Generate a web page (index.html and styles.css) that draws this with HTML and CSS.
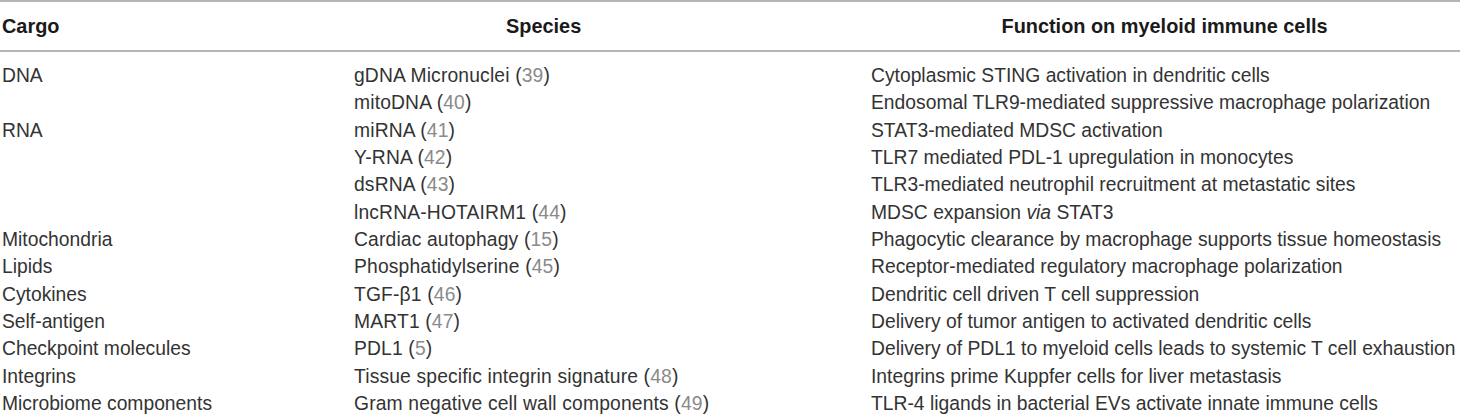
FILE: index.html
```html
<!DOCTYPE html>
<html>
<head>
<meta charset="utf-8">
<link rel="stylesheet" href="styles.css">
</head>
<body>
<div class="table">
  <div class="row head">
    <div class="c1">Cargo</div>
    <div class="c2 h-species">Species</div>
    <div class="c3 h-func">Function on myeloid immune cells</div>
  </div>
  <div class="body">
    <div class="row"><div class="c1">DNA</div><div class="c2">gDNA Micronuclei (<span class="ref">39</span>)</div><div class="c3">Cytoplasmic STING activation in dendritic cells</div></div>
    <div class="row"><div class="c1"></div><div class="c2">mitoDNA (<span class="ref">40</span>)</div><div class="c3">Endosomal TLR9-mediated suppressive macrophage polarization</div></div>
    <div class="row"><div class="c1">RNA</div><div class="c2">miRNA (<span class="ref">41</span>)</div><div class="c3">STAT3-mediated MDSC activation</div></div>
    <div class="row"><div class="c1"></div><div class="c2">Y-RNA (<span class="ref">42</span>)</div><div class="c3">TLR7 mediated PDL-1 upregulation in monocytes</div></div>
    <div class="row"><div class="c1"></div><div class="c2">dsRNA (<span class="ref">43</span>)</div><div class="c3">TLR3-mediated neutrophil recruitment at metastatic sites</div></div>
    <div class="row"><div class="c1"></div><div class="c2">lncRNA-HOTAIRM1 (<span class="ref">44</span>)</div><div class="c3">MDSC expansion <i>via</i> STAT3</div></div>
    <div class="row"><div class="c1">Mitochondria</div><div class="c2">Cardiac autophagy (<span class="ref">15</span>)</div><div class="c3">Phagocytic clearance by macrophage supports tissue homeostasis</div></div>
    <div class="row"><div class="c1">Lipids</div><div class="c2">Phosphatidylserine (<span class="ref">45</span>)</div><div class="c3">Receptor-mediated regulatory macrophage polarization</div></div>
    <div class="row"><div class="c1">Cytokines</div><div class="c2">TGF-β1 (<span class="ref">46</span>)</div><div class="c3">Dendritic cell driven T cell suppression</div></div>
    <div class="row"><div class="c1">Self-antigen</div><div class="c2">MART1 (<span class="ref">47</span>)</div><div class="c3">Delivery of tumor antigen to activated dendritic cells</div></div>
    <div class="row"><div class="c1">Checkpoint molecules</div><div class="c2">PDL1 (<span class="ref">5</span>)</div><div class="c3">Delivery of PDL1 to myeloid cells leads to systemic T cell exhaustion</div></div>
    <div class="row"><div class="c1">Integrins</div><div class="c2">Tissue specific integrin signature (<span class="ref">48</span>)</div><div class="c3">Integrins prime Kuppfer cells for liver metastasis</div></div>
    <div class="row"><div class="c1">Microbiome components</div><div class="c2">Gram negative cell wall components (<span class="ref">49</span>)</div><div class="c3">TLR-4 ligands in bacterial EVs activate innate immune cells</div></div>
  </div>
</div>
</body>
</html>
```
FILE: styles.css
```css
html, body {
  margin: 0;
  padding: 0;
  background: #ffffff;
}
body {
  font-family: "Liberation Sans", Arial, sans-serif;
  font-size: 19.3px;
  color: #333333;
}
.table {
  width: 1460px;
  border-top: 2px solid #b4b4b4;
}
.row {
  display: grid;
  grid-template-columns: 352px 517px 1fr;
  line-height: 27.33px;
  white-space: nowrap;
}
.c1 { padding-left: 2px; }
.c2 { padding-left: 2px; letter-spacing: 0.15px; }
.c3 { padding-left: 2px; }
.head {
  height: 47px;
  padding-top: 1px;
  align-items: center;
  font-size: 19.9px;
  font-weight: bold;
  color: #1a1a1a;
  border-bottom: 2px solid #b4b4b4;
}
.head .c2 { letter-spacing: 0; }
.h-species { padding-left: 154px; }
.h-func { text-align: center; padding-left: 0; }
.body {
  padding-top: 10px;
}
.ref {
  color: #8a8a8a;
}
```
